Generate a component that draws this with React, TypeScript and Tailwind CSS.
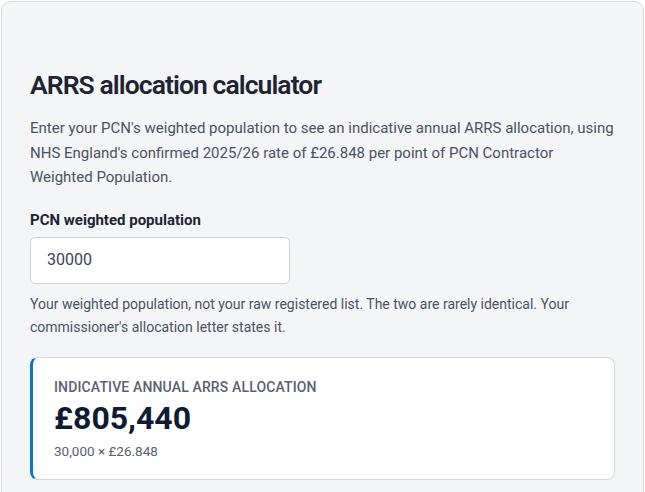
import React from "react";

export default function App() {
  return (
    <div className="w-[645px] h-[492px] overflow-hidden bg-white p-px" style={{ fontFamily: "Roboto, 'Liberation Sans', sans-serif" }}>
      <div className="h-[520px] rounded-[10px] border border-[#d5d8de] bg-[#f4f5f7] px-[28px] pt-[66px]">
        <h1 className="text-[26.5px] leading-[34px] font-semibold tracking-[-0.035em] text-[#1f2433]">ARRS allocation calculator</h1>
        <p className="mt-[14px] text-[15px] leading-[24.5px] text-[#4b5263]">
          Enter your PCN's weighted population to see an indicative annual ARRS allocation, using NHS England's confirmed 2025/26 rate of £26.848 per point of PCN Contractor Weighted Population.
        </p>
        <label className="mt-[20px] block text-[15px] leading-[20px] font-bold text-[#1f2433]">PCN weighted population</label>
        <div className="mt-[7px] flex h-[47px] w-[260px] items-center rounded-[5px] border border-[#d1d5db] bg-white px-[16px] text-[16px] text-[#3b4354]">
          30000
        </div>
        <p className="mt-[9px] text-[14px] leading-[23px] text-[#4b5263]">
          Your weighted population, not your raw registered list. The two are rarely identical. Your commissioner's allocation letter states it.
        </p>
        <div className="mt-[18px] h-[123px] w-[585px] rounded-[8px] border border-[#d5d8de] border-l-[3px] border-l-[#0b72c7] bg-white pl-[21px] pt-[20px]">
          <div className="text-[14px] leading-[18px] font-medium tracking-[0.01em] uppercase text-[#5b6171]">Indicative annual ARRS allocation</div>
          <div className="mt-[2px] text-[32px] leading-[40px] font-bold text-[#0f1b33]">£805,440</div>
          <div className="mt-[4px] text-[13.5px] leading-[18px] text-[#5b6171]">30,000 × £26.848</div>
        </div>
      </div>
    </div>
  );
}
